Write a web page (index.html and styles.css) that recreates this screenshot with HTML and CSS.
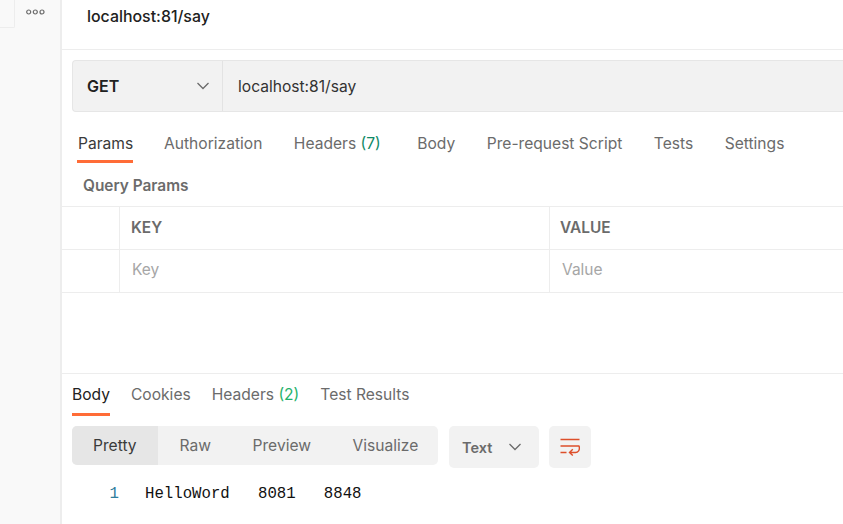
FILE: index.html
```html
<!DOCTYPE html>
<html lang="en">
<head>
<meta charset="utf-8">
<title>localhost:81/say</title>
<link rel="stylesheet" href="styles.css">
</head>
<body>
<div class="app">
  <aside class="side">
    <div class="side-top">
      <div class="side-box"></div>
      <svg class="dots" width="20" height="6" viewBox="0 0 20 6"><circle cx="2.7" cy="3" r="2" /><circle cx="9.3" cy="3" r="2" /><circle cx="16" cy="3" r="2" /></svg>
    </div>
  </aside>
  <main class="main">
    <header class="title-bar"><span class="title">localhost:81/say</span></header>
    <div class="url-bar">
      <div class="method"><span>GET</span>
        <svg class="chev" width="14" height="8" viewBox="0 0 14 8"><path d="M1.500 1l5.500 5.500L12.500 1"/></svg>
      </div>
      <div class="url">localhost:81/say</div>
    </div>
    <nav class="tabs req-tabs">
      <span class="tab active">Params</span>
      <span class="tab">Authorization</span>
      <span class="tab">Headers <em class="count-teal">(7)</em></span>
      <span class="tab tab-body">Body</span>
      <span class="tab">Pre-request Script</span>
      <span class="tab">Tests</span>
      <span class="tab">Settings</span>
    </nav>
    <div class="qp">Query Params</div>
    <div class="grid-row head-row">
      <div class="c0"></div><div class="c1">KEY</div><div class="c2">VALUE</div>
    </div>
    <div class="grid-row body-row">
      <div class="c0"></div><div class="c1">Key</div><div class="c2">Value</div>
    </div>
    <div class="spacer"></div>
    <section class="response">
      <nav class="tabs res-tabs">
        <span class="tab active">Body</span>
        <span class="tab">Cookies</span>
        <span class="tab">Headers <em class="count-green">(2)</em></span>
        <span class="tab">Test Results</span>
      </nav>
      <div class="toolbar">
        <div class="pills">
          <span class="pill on">Pretty</span>
          <span class="pill">Raw</span>
          <span class="pill">Preview</span>
          <span class="pill">Visualize</span>
        </div>
        <div class="format"><span>Text</span>
          <svg class="chev" width="14" height="8" viewBox="0 0 14 8"><path d="M1.500 1l5.500 5.500L12.500 1"/></svg>
        </div>
        <div class="wrap-btn">
          <svg width="20" height="18" viewBox="0 0 20 18"><path d="M.5 1.500h19M.5 8h19M.5 14.500h6M19 8.200c.6 1.500.5 3.200-.4 4.700-.7 1-1.700 1.600-3 1.600H9.500M12.800 11.300l-3.300 3.200 3.300 3"/></svg>
        </div>
      </div>
      <div class="code"><span class="ln">1</span><span class="txt">HelloWord   8081   8848</span></div>
    </section>
  </main>
</div>
</body>
</html>
```
FILE: styles.css
```css
* { box-sizing: border-box; }
html, body { margin: 0; height: 100%; }
body { font-family: Inter, "Liberation Sans", sans-serif; background: #fff; overflow: hidden; }
.app { display: flex; width: 843px; height: 524px; }
.side { width: 62px; flex: none; background: #f9f9f9; border-right: 2px solid #ededed; }
.side-top { display: flex; align-items: flex-start; }
.side-box { width: 15px; height: 28px; border-right: 1px solid #ededed; border-bottom: 1px solid #ededed; border-bottom-right-radius: 2px; }
.dots { margin: 9px 0 0 11px; fill: none; stroke: #6b6b6b; stroke-width: 1.200; }
.main { flex: 1; min-width: 0; display: flex; flex-direction: column; }
.title-bar { height: 50px; flex: none; border-bottom: 1px solid #ededed; padding: 6px 0 0 25px; }
.title { font-size: 15.900px; font-weight: 500; line-height: 21px; color: #212121; }
.url-bar { display: flex; height: 52px; flex: none; margin: 10px 0 0 10px; background: #f2f2f2; border: 1px solid #e6e6e6; border-right: 0; border-radius: 4px 0 0 4px; }
.method { width: 150px; flex: none; display: flex; align-items: center; justify-content: space-between; padding: 0 12px 0 14px; border-right: 1px solid #e3e3e3; font-size: 16px; font-weight: 600; color: #212121; }
.chev { fill: none; stroke: #6b6b6b; stroke-width: 1.300; }
.url { padding-left: 15px; font-size: 15.600px; line-height: 51px; color: #333; }
.tabs { display: flex; flex: none; font-size: 15.600px; color: #6b6b6b; }
.tab { display: block; height: 100%; }
.tab em { font-style: normal; }
.count-teal { color: #0f8a66; }
.count-green { color: #1fb26b; }
.tab.active { color: #212121; border-bottom: 3px solid #ff6c37; }
.req-tabs { height: 51px; margin-left: 15px; padding-top: 22px; gap: 31.500px; line-height: 20px; }
.req-tabs .tab.active { width: 56px; height: 29px; padding-left: 1px; margin-right: -0.500px; color: #3a3a3a; }
.tab-body { margin-left: 5px; }
.qp { height: 44px; flex: none; padding: 13px 0 0 21px; font-size: 15.400px; font-weight: 600; line-height: 20px; color: #6b6b6b; border-bottom: 1px solid #ededed; }
.grid-row { display: flex; height: 43px; flex: none; border-bottom: 1px solid #ededed; }
.c0 { width: 58px; flex: none; border-right: 1px solid #ededed; }
.c1 { width: 430px; flex: none; border-right: 1px solid #ededed; padding-left: 11px; }
.c2 { flex: 1; padding-left: 10px; }
.head-row { font-size: 15.400px; font-weight: 600; line-height: 42px; color: #6b6b6b; }
.body-row { font-size: 15.500px; line-height: 40px; color: #a6a6a6; }
.body-row .c1 { padding-left: 12px; }
.body-row .c2 { padding-left: 12px; }
.spacer { height: 81px; flex: none; border-bottom: 1px solid #ededed; }
.response { padding-left: 10px; }
.res-tabs { height: 42px; padding-top: 11px; gap: 21px; line-height: 20px; }
.res-tabs .tab.active { height: 31px; }
.toolbar { display: flex; align-items: flex-start; margin-top: 10px; }
.pills { display: flex; height: 39px; width: 366px; background: #f2f2f2; border-radius: 5px; overflow: hidden; font-size: 15.600px; line-height: 39px; color: #6b6b6b; }
.pill { padding: 0 21px; }
.pill:nth-child(2) { margin-left: 1px; }
.pill:nth-child(2), .pill:nth-child(3) { padding-right: 20.500px; }
.pill.on { background: #e6e6e6; color: #3a3a3a; }
.format { width: 90px; height: 42px; margin-left: 11px; display: flex; align-items: center; justify-content: space-between; padding: 0 17px 0 13px; background: #f2f2f2; border-radius: 5px; font-size: 14.500px; font-weight: 600; color: #6b6b6b; }
.wrap-btn { width: 42px; height: 42px; margin-left: 10px; display: flex; align-items: center; justify-content: center; background: #f2f2f2; border-radius: 5px; }
.wrap-btn svg { fill: none; stroke: #dd4f2b; stroke-width: 1.400; }
.code { display: flex; margin-top: 16px; font-family: "Liberation Mono", monospace; font-size: 15.700px; line-height: 20px; white-space: pre; color: #111; }
.ln { width: 48px; flex: none; padding-right: 1px; text-align: right; color: #2f7d9c; }
.txt { margin-left: 25px; }
```
